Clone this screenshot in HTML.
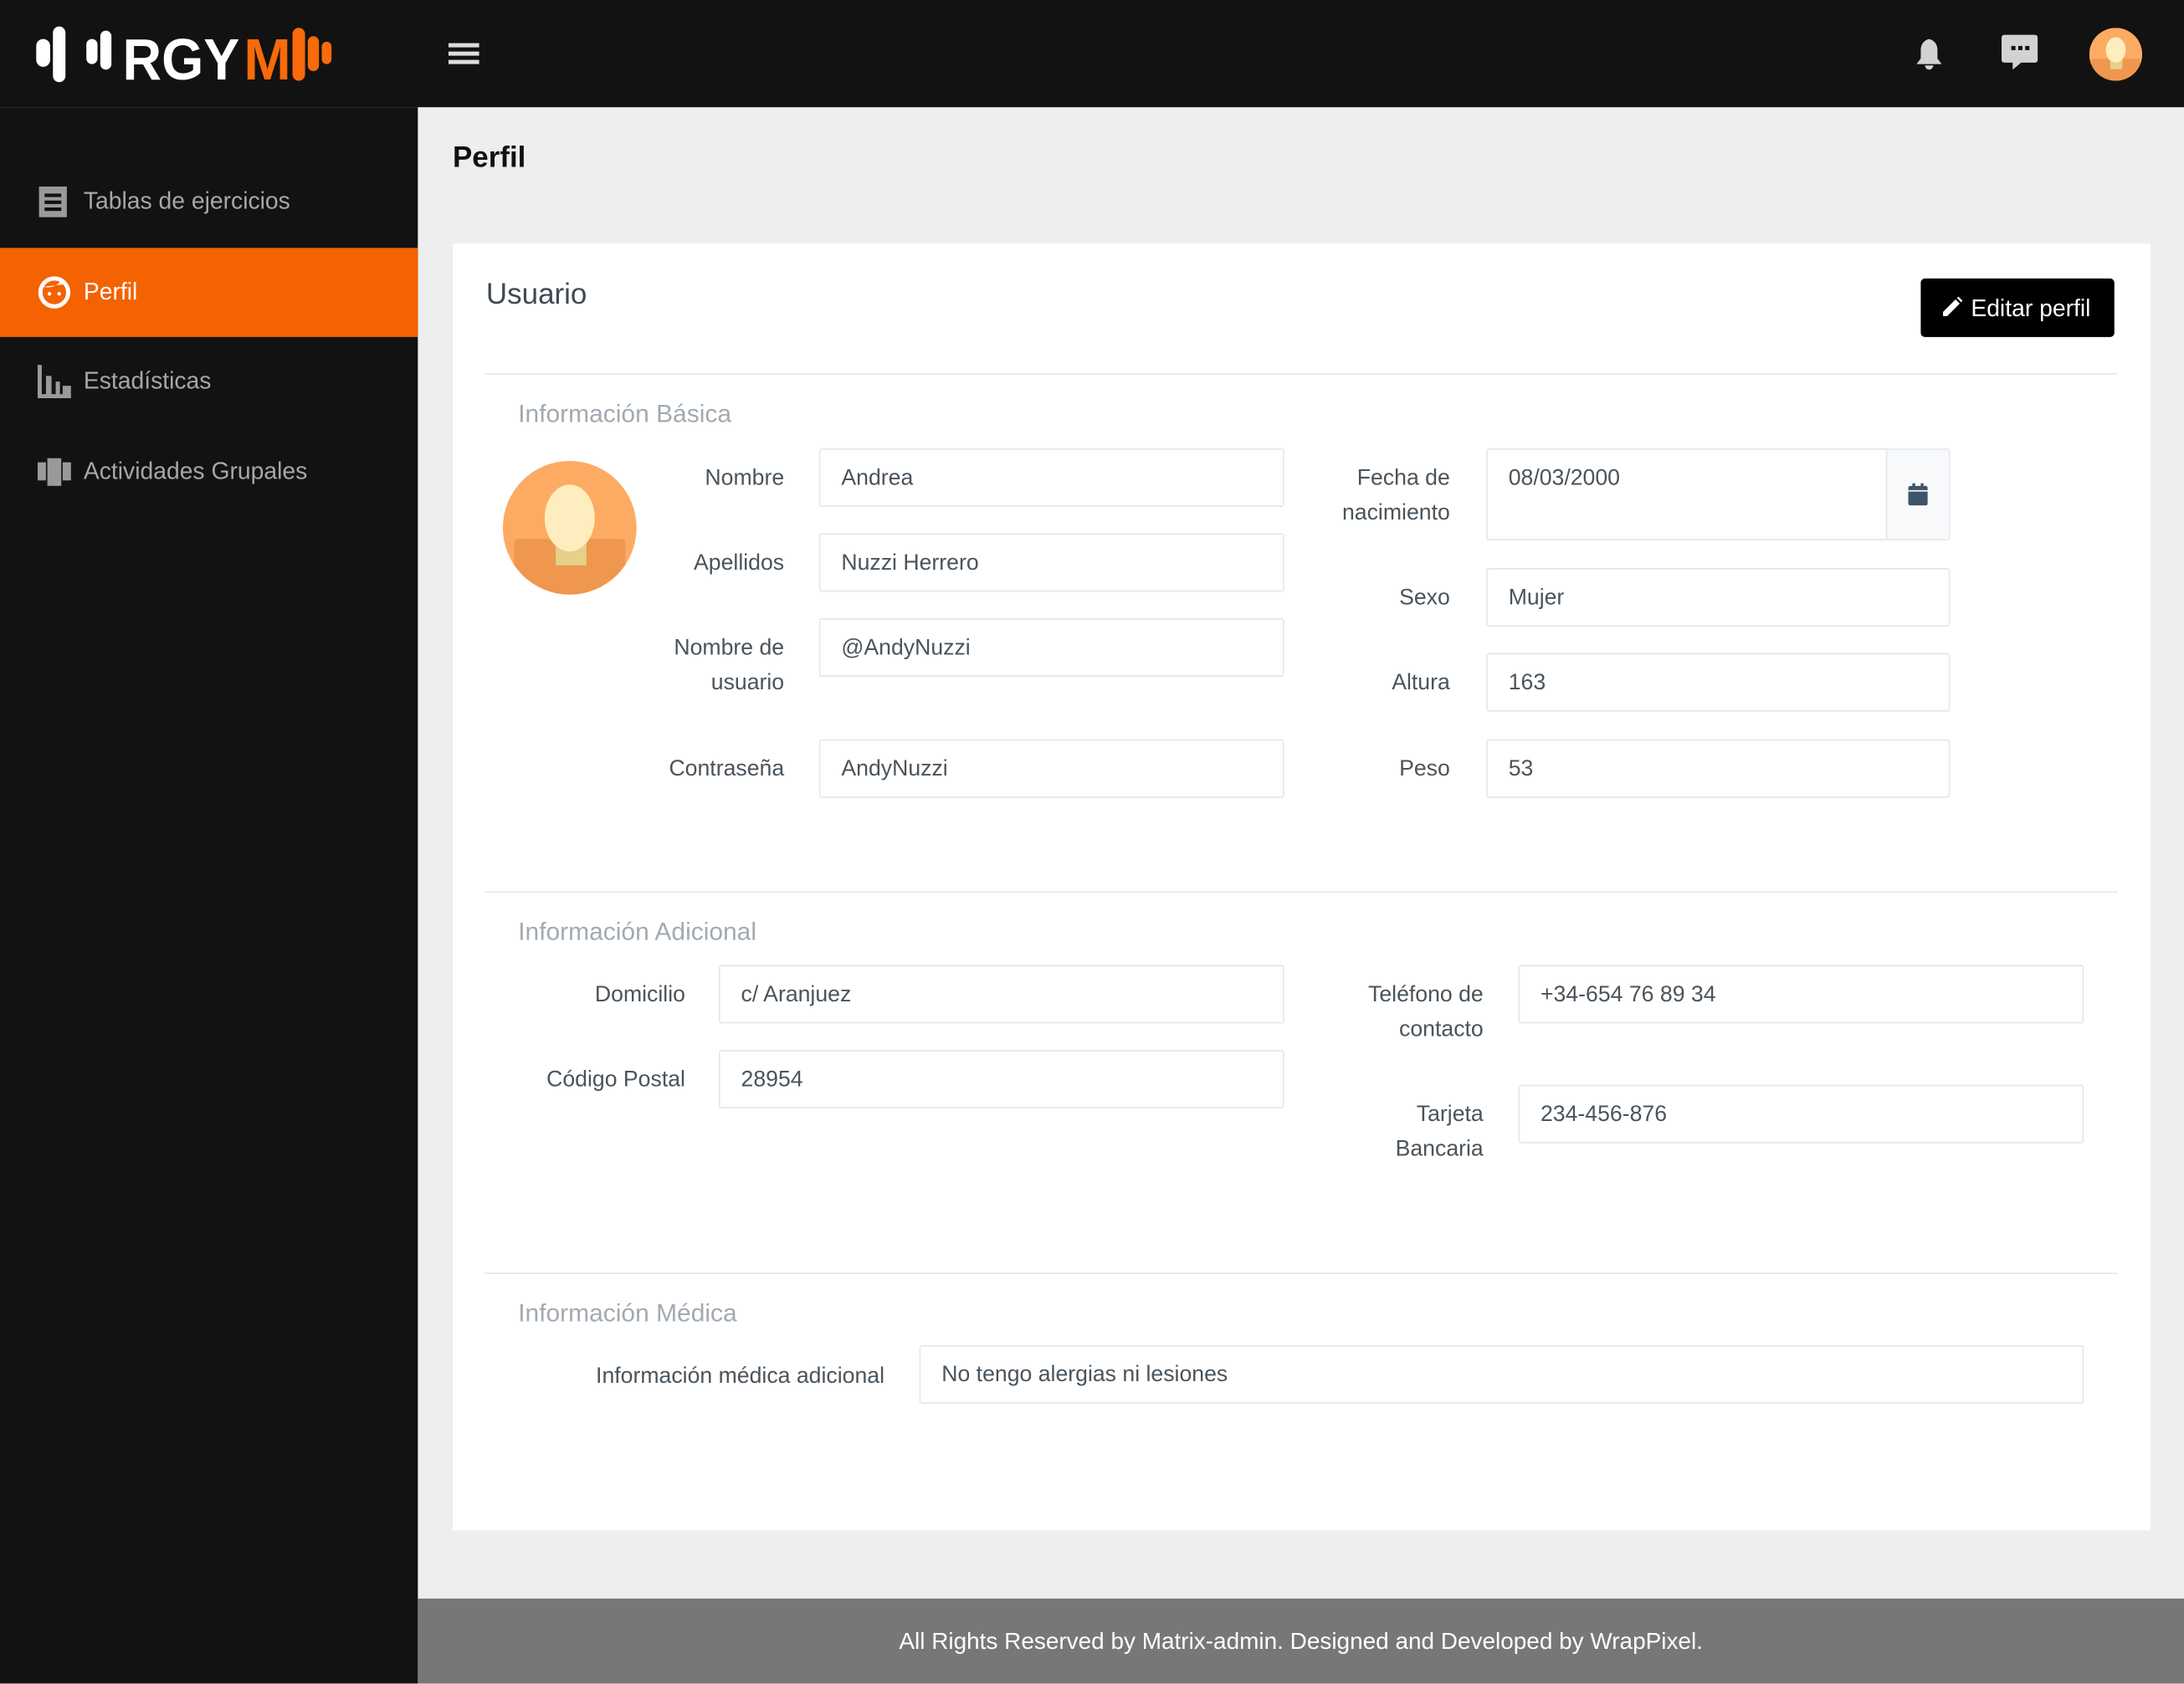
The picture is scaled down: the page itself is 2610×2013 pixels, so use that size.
<!DOCTYPE html>
<html><head><meta charset="utf-8"><style>
*{box-sizing:border-box;margin:0;padding:0}
html,body{width:2610px;height:2013px;overflow:hidden;background:#eeeeee}
#w{width:1568px;height:1209px;transform:scale(1.66454);transform-origin:0 0;position:relative;font-family:"Liberation Sans",sans-serif;background:#eeeeee}
.a{position:absolute}
.top{left:0;top:0;width:1568px;height:77px;background:#121212}
.side{left:0;top:77px;width:300px;height:1132px;background:#121212}
.nav{left:0;width:300px;height:64px;color:#a7a7a7;font-size:17px;display:flex;align-items:center;padding-left:60px}
.nav svg{position:absolute;left:27px}
.card{left:325px;top:175px;width:1219px;height:924px;background:#fff}
.hr{height:1px;background:#e4e7ea}
.sec{color:#a1aab2;font-size:18px}
.lbl{color:#4a545c;font-size:16px;text-align:right;line-height:25px}
.inp{border:1px solid #e4e7ea;border-radius:2px;height:42px;background:#fff;color:#4a545c;font-size:16px;padding:0 15px;line-height:41px}
</style></head><body><div id="w">
<div class="a top"></div>
<svg class="a" style="left:22px;top:16px" width="222" height="48" viewBox="0 0 222 48">
<g fill="#fff"><rect x="4" y="12" width="10" height="20" rx="5"/><rect x="16" y="3" width="9" height="40" rx="4.5"/><rect x="40" y="12" width="8" height="18" rx="4"/><rect x="50" y="6" width="8" height="28" rx="4"/></g>
<text x="66" y="41" font-family="Liberation Sans" font-weight="bold" font-size="42" fill="#fff" textLength="84" lengthAdjust="spacingAndGlyphs">RGY</text>
<text x="153" y="41" font-family="Liberation Sans" font-weight="bold" font-size="42" fill="#f86a0a" textLength="34" lengthAdjust="spacingAndGlyphs">M</text>
<g fill="#f86a0a"><rect x="188" y="4" width="9" height="38" rx="4.5"/><rect x="199" y="10" width="8" height="25" rx="4"/><rect x="209" y="14" width="7" height="16" rx="3.5"/></g>
</svg>
<div class="a" style="left:322px;top:31px;width:22px;height:3px;background:#ddd;box-shadow:0 6px 0 #ddd,0 12px 0 #ddd"></div>
<svg class="a" style="left:1374px;top:25px" width="22" height="26" viewBox="0 0 22 26"><path d="M11 1v2c-4 1-6 4-6 8v6l-3 4h18l-3-4v-6c0-4-2-7-6-8V1z M8 22a3 3 0 0 0 6 0z" fill="#d2d2d2"/></svg>
<svg class="a" style="left:1437px;top:24px" width="26" height="26" viewBox="0 0 26 26"><path d="M2 1h22a2 2 0 0 1 2 2v16a2 2 0 0 1-2 2H14l-6 5v-5H2a2 2 0 0 1-2-2V3a2 2 0 0 1 2-2z" fill="#d2d2d2"/><rect x="7" y="9" width="3" height="3" fill="#121212"/><rect x="12" y="9" width="3" height="3" fill="#121212"/><rect x="17" y="9" width="3" height="3" fill="#121212"/></svg>
<svg class="a" style="left:1500px;top:20px" width="38" height="38" viewBox="0 0 96 96"><defs><clipPath id="c1"><circle cx="48" cy="48" r="48"/></clipPath></defs><g clip-path="url(#c1)"><rect width="96" height="96" fill="#fdab63"/><rect x="4" y="56" width="88" height="50" rx="3" fill="#ef974e"/><rect x="38" y="56" width="22" height="19" fill="#e6d08a"/><ellipse cx="48" cy="40" rx="18" ry="23" fill="#feedbf"/></g></svg>
<div class="a side"></div>
<div class="a nav" style="top:113px"><svg width="22" height="24" viewBox="0 0 22 24"><path d="M1 1h20v22H1z" fill="#9a9a9a"/><rect x="5" y="6" width="12" height="2.5" fill="#121212"/><rect x="5" y="11" width="12" height="2.5" fill="#121212"/><rect x="5" y="16" width="12" height="2.5" fill="#121212"/></svg>Tablas de ejercicios</div>
<div class="a nav" style="top:178px;background:#f46201;color:#fff"><svg width="24" height="24" viewBox="0 0 24 24"><circle cx="12" cy="12" r="10" fill="none" stroke="#fff" stroke-width="3"/><path d="M4 8c4 1 10 0 13-5l3 3z" fill="#fff"/><circle cx="8.5" cy="13" r="1.3" fill="#fff"/><circle cx="15.5" cy="13" r="1.3" fill="#fff"/></svg>Perfil</div>
<div class="a nav" style="top:242px"><svg width="24" height="24" viewBox="0 0 24 24"><path d="M0 0h3v21h3V8h4v13h3V12h3v9h2v-6h6v9H0z" fill="#9a9a9a"/></svg>Estadísticas</div>
<div class="a nav" style="top:307px"><svg width="24" height="20" viewBox="0 0 24 20"><rect x="0" y="3" width="6" height="13" fill="#9a9a9a"/><rect x="7" y="0" width="10" height="20" fill="#9a9a9a"/><rect x="18" y="3" width="6" height="13" fill="#9a9a9a"/></svg>Actividades Grupales</div>

<div class="a" style="left:325px;top:102px;font-size:21px;font-weight:bold;color:#111">Perfil</div>
<div class="a card"></div>
<div class="a" style="left:349px;top:200px;font-size:21px;color:#3e4a55">Usuario</div>
<div class="a" style="left:1379px;top:200px;width:139px;height:42px;background:#000;border-radius:3px;color:#fff;font-size:17px;line-height:43px;padding-left:36px">Editar perfil</div>
<svg class="a" style="left:1394px;top:213px" width="15" height="15" viewBox="0 0 15 15"><path d="M1 11l9-9 3 3-9 9H1z M11 1l1-1 3 3-1 1z" fill="#fff"/></svg>

<div class="a hr" style="left:348px;top:268px;width:1172px"></div>
<div class="a sec" style="left:372px;top:287px">Información Básica</div>
<svg class="a" style="left:361px;top:331px" width="96" height="96" viewBox="0 0 96 96"><defs><clipPath id="c2"><circle cx="48" cy="48" r="48"/></clipPath></defs><g clip-path="url(#c2)"><rect width="96" height="96" fill="#fdab63"/><rect x="8" y="56" width="80" height="50" rx="3" fill="#ef974e"/><rect x="38" y="56" width="22" height="19" fill="#e6d08a"/><ellipse cx="48" cy="41" rx="18" ry="24" fill="#feedbf"/></g></svg>

<div class="a lbl" style="right:1005px;top:331px">Nombre</div>
<div class="a inp" style="left:588px;top:322px;width:334px">Andrea</div>
<div class="a lbl" style="right:1005px;top:392px">Apellidos</div>
<div class="a inp" style="left:588px;top:383px;width:334px">Nuzzi Herrero</div>
<div class="a lbl" style="right:1005px;top:453px">Nombre de<br>usuario</div>
<div class="a inp" style="left:588px;top:444px;width:334px">@AndyNuzzi</div>
<div class="a lbl" style="right:1005px;top:540px">Contraseña</div>
<div class="a inp" style="left:588px;top:531px;width:334px">AndyNuzzi</div>

<div class="a lbl" style="right:527px;top:331px">Fecha de<br>nacimiento</div>
<div class="a inp" style="left:1067px;top:322px;width:333px;height:66px">08/03/2000</div>
<div class="a" style="left:1354px;top:323px;width:45px;height:64px;background:#f8f9fa;border-left:1px solid #e4e7ea"></div>
<svg class="a" style="left:1370px;top:347px" width="14" height="16" viewBox="0 0 14 16"><rect x="0" y="2" width="14" height="14" rx="1.5" fill="#3e5569"/><rect x="3" y="0" width="2" height="4" fill="#3e5569"/><rect x="9" y="0" width="2" height="4" fill="#3e5569"/><rect x="0" y="5" width="14" height="1" fill="#f8f9fa"/></svg>
<div class="a lbl" style="right:527px;top:417px">Sexo</div>
<div class="a inp" style="left:1067px;top:408px;width:333px">Mujer</div>
<div class="a lbl" style="right:527px;top:478px">Altura</div>
<div class="a inp" style="left:1067px;top:469px;width:333px">163</div>
<div class="a lbl" style="right:527px;top:540px">Peso</div>
<div class="a inp" style="left:1067px;top:531px;width:333px">53</div>

<div class="a hr" style="left:348px;top:640px;width:1172px"></div>
<div class="a sec" style="left:372px;top:659px">Información Adicional</div>
<div class="a lbl" style="right:1076px;top:702px">Domicilio</div>
<div class="a inp" style="left:516px;top:693px;width:406px">c/ Aranjuez</div>
<div class="a lbl" style="right:1076px;top:763px">Código Postal</div>
<div class="a inp" style="left:516px;top:754px;width:406px">28954</div>
<div class="a lbl" style="right:503px;top:702px">Teléfono de<br>contacto</div>
<div class="a inp" style="left:1090px;top:693px;width:406px">+34-654 76 89 34</div>
<div class="a lbl" style="right:503px;top:788px">Tarjeta<br>Bancaria</div>
<div class="a inp" style="left:1090px;top:779px;width:406px">234-456-876</div>

<div class="a hr" style="left:348px;top:914px;width:1172px"></div>
<div class="a sec" style="left:372px;top:933px">Información Médica</div>
<div class="a lbl" style="right:933px;top:976px">Información médica adicional</div>
<div class="a inp" style="left:660px;top:966px;width:836px">No tengo alergias ni lesiones</div>

<div class="a" style="left:300px;top:1148px;width:1268px;height:61px;background:#777;color:#fff;font-size:16.8px;text-align:center;line-height:62px">All Rights Reserved by Matrix-admin. Designed and Developed by WrapPixel.</div>
</div></body></html>
